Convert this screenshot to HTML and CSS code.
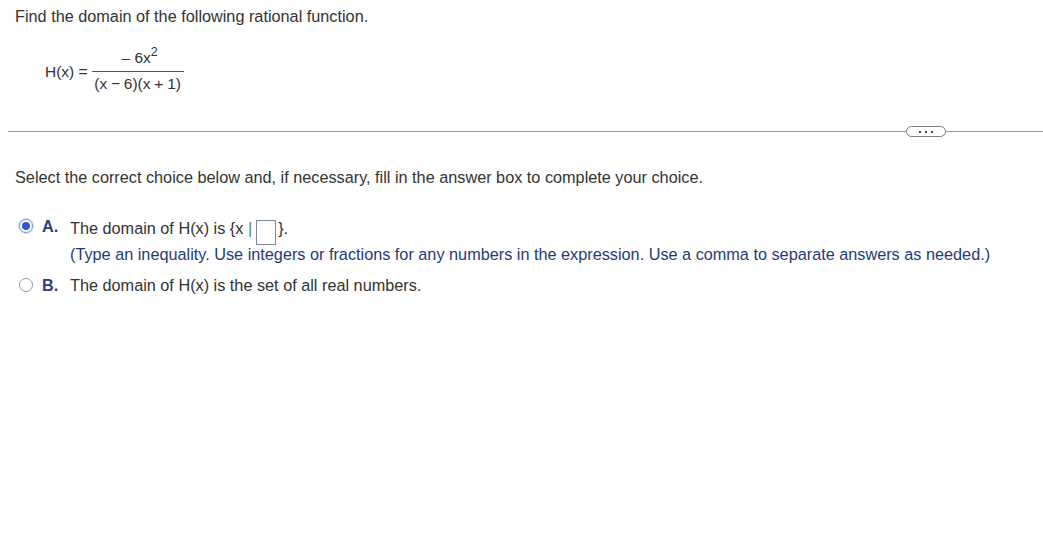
FILE: index.html
```html
<!DOCTYPE html>
<html>
<head>
<meta charset="utf-8">
<link rel="stylesheet" href="styles.css">
</head>
<body>
<div class="question">
  <p class="prompt">Find the domain of the following rational function.</p>
  <div class="equation">
    <span class="lhs">H(x) =</span>
    <span class="frac">
      <span class="num">– 6x<sup>2</sup></span>
      <span class="den">(x − 6)(x + 1)</span>
    </span>
  </div>
</div>
<div class="divider">
  <span class="pill"><span></span><span></span><span></span></span>
</div>
<div class="answer">
  <p class="instr">Select the correct choice below and, if necessary, fill in the answer box to complete your choice.</p>
  <div class="choice">
    <span class="radio checked"></span>
    <span class="letter">A.</span>
    <div class="ctext">
      <div>The domain of H(x) is {x <span class="bar">|</span><span class="box"></span>}.</div>
      <div class="hint">(Type an inequality. Use integers or fractions for any numbers in the expression. Use a comma to separate answers as needed.)</div>
    </div>
  </div>
  <div class="choice b">
    <span class="radio"></span>
    <span class="letter">B.</span>
    <div class="ctext">
      <div>The domain of H(x) is the set of all real numbers.</div>
    </div>
  </div>
</div>
</body>
</html>
```
FILE: styles.css
```css
html, body {
  margin: 0;
  padding: 0;
  background: #ffffff;
}
body {
  font-family: "Liberation Sans", Arial, sans-serif;
  font-size: 16.25px;
  color: #333333;
}
p { margin: 0; }
.question {
  padding: 6px 15px 0 15px;
  height: 131px;
  box-sizing: border-box;
}
.prompt {
  line-height: 20px;
}
.equation {
  display: flex;
  align-items: center;
  margin-top: 22px;
  padding-left: 30px;
}
.lhs {
  margin-right: 4px;
  margin-top: 2px;
  font-size: 15.5px;
}
.frac {
  display: inline-flex;
  flex-direction: column;
  align-items: center;
  font-size: 15.5px;
}
.num {
  line-height: 20px;
  padding-bottom: 3px;
  border-bottom: 1px solid #555;
  width: 92px;
  text-align: center;
  padding-left: 4px;
  box-sizing: border-box;
}
.num sup {
  font-size: 12.5px;
  vertical-align: 7px;
  line-height: 0;
}
.den {
  line-height: 20px;
  padding-top: 2px;
  word-spacing: -0.5px;
}
.divider {
  position: relative;
  margin-left: 8px;
  border-top: 1px solid #999;
  height: 0;
}
.pill {
  position: absolute;
  left: 898px;
  top: -6px;
  width: 40px;
  height: 11px;
  box-sizing: border-box;
  border: 1px solid #7a7a7a;
  border-radius: 6px;
  background: #fff;
  display: flex;
  justify-content: center;
  align-items: center;
  gap: 4px;
}
.pill span {
  width: 2px;
  height: 2px;
  background: #444;
}
.answer {
  padding: 35px 15px 0 15px;
}
.instr {
  line-height: 20px;
}
.choice {
  display: flex;
  align-items: flex-start;
  margin-top: 31px;
  padding-left: 4px;
}
.choice.b {
  margin-top: 11px;
}
.radio {
  width: 14px;
  height: 14px;
  box-sizing: border-box;
  border: 1px solid #8a94a8;
  border-radius: 50%;
  margin-top: 1px;
  position: relative;
  flex: none;
}
.choice.b .radio {
  margin-top: 3px;
  border: 1.5px solid #8f9ab0;
}
.radio.checked {
  border-color: #7c93c8;
  box-shadow: 0 0 0 1px rgba(150,175,225,0.45);
}
.radio.checked::after {
  content: "";
  position: absolute;
  left: 2px;
  top: 2px;
  width: 8px;
  height: 8px;
  border-radius: 50%;
  background: #2f5bc4;
}
.letter {
  font-weight: bold;
  color: #2f3f78;
  margin-left: 9px;
  width: 28px;
  line-height: 16px;
  flex: none;
}
.choice.b .letter {
  line-height: 20px;
}
.ctext {
  line-height: 20px;
}
.bar {
  color: #4a8a6a;
}
.box {
  display: inline-block;
  width: 20px;
  height: 25px;
  box-sizing: border-box;
  border: 1px solid #7d8a96;
  vertical-align: -7px;
  margin: -4px 2px -4px 4px;
}
.hint {
  color: #1f3a78;
  margin-top: 3px;
}
```
